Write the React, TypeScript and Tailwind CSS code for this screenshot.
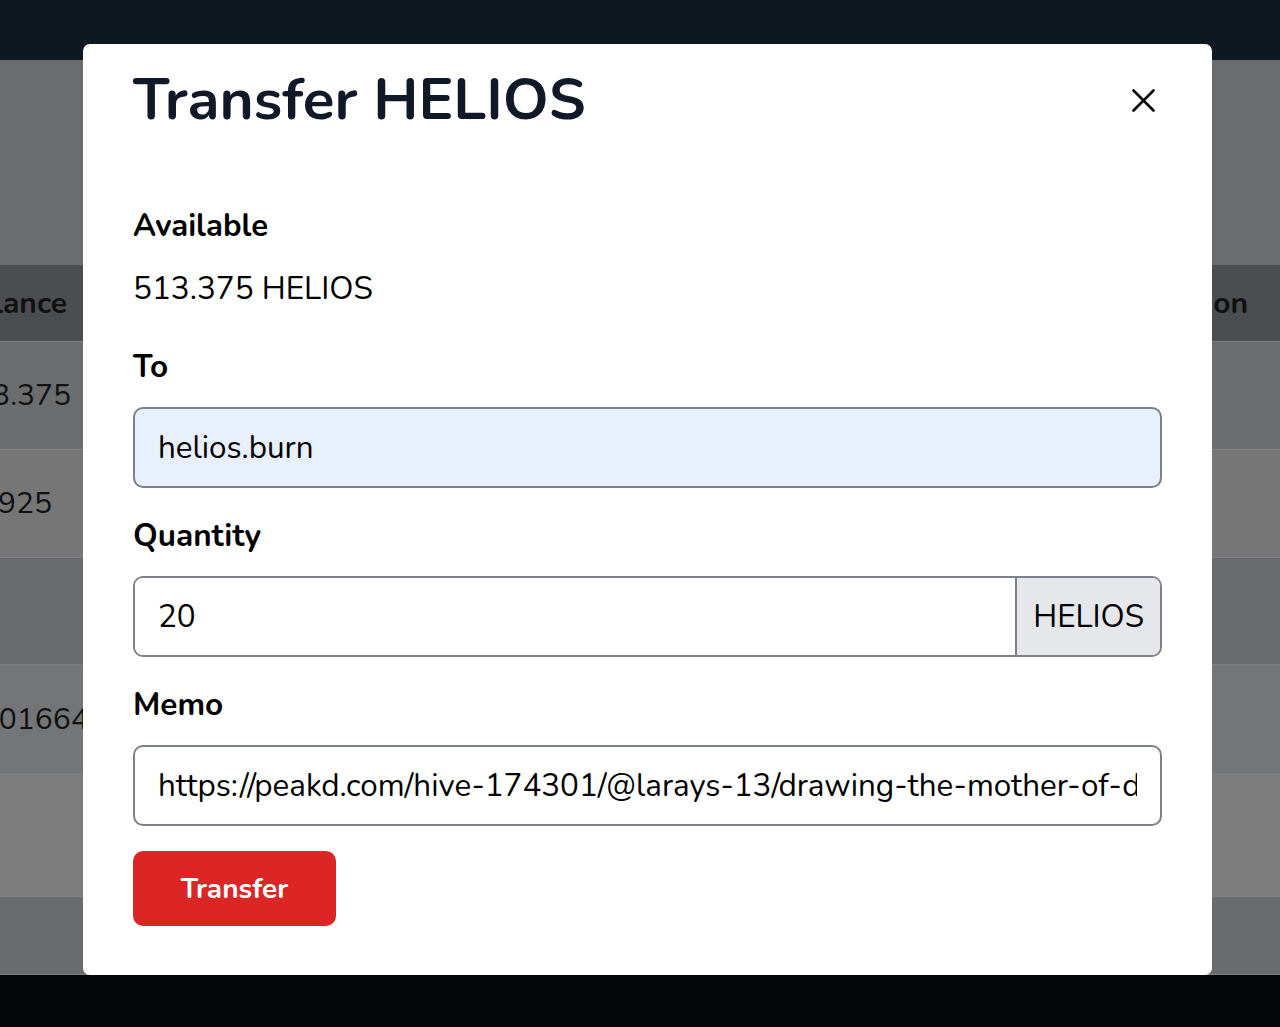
import { useState } from 'react'

const rows = [
  { h: 'h-[77px] bg-[#4b4d51] font-bold', left: 'Balance', leftCls: 'w-[67px] justify-end', right: 'Action' },
  { h: 'h-[108px] bg-[#6c6d6f]', left: '513.375', leftCls: 'w-[71px] justify-end', right: '' },
  { h: 'h-[108px] bg-[#767677]', left: '63.925', leftCls: 'w-[52px] justify-end', right: '' },
  { h: 'h-[107px] bg-[#6a6b6d]', left: '', leftCls: 'w-[52px] justify-end', right: '' },
  { h: 'h-[110px] bg-[#747576]', left: '0.0166452', leftCls: '-ml-[26px] justify-start', right: '' },
  { h: 'h-[122px] bg-[#7c7c7c]', left: '', leftCls: 'w-[52px] justify-end', right: '' },
  { h: 'h-[78px] bg-[#6a6b6e]', left: '', leftCls: 'w-[52px] justify-end', right: '' },
]

function Field({ label, children }: { label: string; children: React.ReactNode }) {
  return (
    <div className="mt-[27px] first:mt-0">
      <label className="block text-[31.5px] leading-[42px] font-bold text-black mb-[19px]">{label}</label>
      {children}
    </div>
  )
}

export default function App() {
  const [to, setTo] = useState('helios.burn')
  const [qty, setQty] = useState('20')
  const [memo, setMemo] = useState('https://peakd.com/hive-174301/@larays-13/drawing-the-mother-of-dragons')

  return (
    <div className="relative h-[1027px] overflow-hidden flex flex-col font-[Nunito,Lato,sans-serif] text-[#111111]">
      {/* page behind the modal */}
      <div className="h-[60px] bg-[#0f1720]" />
      <div className="h-[205px] bg-[#6b6c6e]" />
      {rows.map((r, i) => (
        <div key={i} className={`${r.h} flex items-center justify-between border-b border-[#7f8083] text-[30px] whitespace-nowrap`}>
          <div className={`flex ${r.leftCls}`}>{r.left}</div>
          <div className="pr-[32px]">{r.right}</div>
        </div>
      ))}
      <div className="flex-1 bg-[#030507]" />

      {/* modal */}
      <div className="fixed left-[83px] top-[44px] w-[1129px] h-[931px] bg-white rounded-[7px] px-[50px] pt-[26px]">
        <div className="flex items-start justify-between">
          <h1 className="text-[58.5px] leading-[60px] font-bold text-[#111827]">Transfer HELIOS</h1>
          <button className="mt-[19px] mr-[7px] text-black">
            <svg width="23" height="23" viewBox="0 0 23 23" fill="none" stroke="currentColor" strokeWidth="2.6" strokeLinecap="round">
              <path d="M1.5 1.5 21.5 21.5M21.5 1.5 1.5 21.5" />
            </svg>
          </button>
        </div>

        <div className="mt-[74px] text-[31.5px] leading-[45px] text-black">
          <div className="font-bold text-[31px]">Available</div>
          <div className="mt-[17px]">513.375 HELIOS</div>
        </div>

        <div className="mt-[35px]">
          <Field label="To">
            <input
              value={to}
              onChange={(e) => setTo(e.target.value)}
              className="w-full h-[81px] rounded-[10px] border-2 border-[#7d8088] bg-[#e8f0fe] px-[23px] text-[31.4px] text-black outline-none"
            />
          </Field>
          <Field label="Quantity">
            <div className="flex h-[81px] rounded-[10px] border-2 border-[#7d8088] overflow-hidden">
              <input
                value={qty}
                onChange={(e) => setQty(e.target.value)}
                className="flex-1 min-w-0 px-[23px] text-[31.4px] text-black outline-none bg-white"
              />
              <span className="flex items-center border-l-2 border-[#7d8088] bg-[#e5e7eb] px-[16px] text-[31.4px] text-black">HELIOS</span>
            </div>
          </Field>
          <Field label="Memo">
            <input
              value={memo}
              onChange={(e) => setMemo(e.target.value)}
              className="w-full h-[81px] rounded-[10px] border-2 border-[#7d8088] bg-white px-[23px] text-[31.4px] text-black outline-none"
            />
          </Field>
        </div>

        <button className="mt-[25px] w-[203px] h-[75px] rounded-[10px] bg-[#dc2626] text-white text-[28px] font-bold">
          Transfer
        </button>
      </div>
    </div>
  )
}
